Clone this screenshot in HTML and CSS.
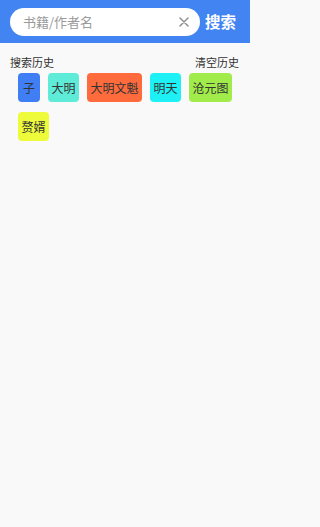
FILE: index.html
```html
<!DOCTYPE html>
<html lang="zh">
<head>
<meta charset="utf-8">
<meta name="viewport" content="width=250">
<link rel="stylesheet" href="styles.css">
</head>
<body>
<div class="page">
  <div class="header">
    <div class="search-box">
      <span class="placeholder">书籍/作者名</span>
      <svg class="clear" width="10" height="10" viewBox="0 0 10 10"><path d="M1 1L9 9M9 1L1 9" stroke="#8a8a8a" stroke-width="1.4" fill="none" stroke-linecap="round"/></svg>
    </div>
    <span class="search-btn">搜索</span>
  </div>
  <div class="history-head">
    <span>搜索历史</span>
    <span>清空历史</span>
  </div>
  <div class="tags">
    <span class="tag single c-blue">子</span>
    <span class="tag c-teal">大明</span>
    <span class="tag c-orange">大明文魁</span>
    <span class="tag c-cyan">明天</span>
    <span class="tag c-green">沧元图</span>
    <span class="tag c-yellow">赘婿</span>
  </div>
</div>
</body>
</html>
```
FILE: styles.css
```css
html, body {
  margin: 0;
  padding: 0;
  height: 100%;
  background: #f9f9f9;
  font-family: "Noto Sans CJK SC", "Noto Sans", sans-serif;
  color: #333;
}
.page {
  width: 250px;
  min-height: 100%;
}
.header {
  height: 43px;
  background: #4285f2;
  display: flex;
  align-items: center;
  padding: 0 0 0 10px;
}
.search-box {
  width: 190px;
  height: 28px;
  border-radius: 14px;
  background: #fff;
  display: flex;
  align-items: center;
  justify-content: space-between;
  padding: 0 11px 0 13px;
  box-sizing: border-box;
}
.placeholder {
  font-size: 13px;
  color: #9a9a9a;
  line-height: 1;
}
.clear {
  display: block;
}
.search-btn {
  margin-left: 5px;
  font-size: 15.5px;
  font-weight: bold;
  color: #fff;
  line-height: 1;
}
.history-head {
  display: flex;
  justify-content: space-between;
  padding: 0 11px 0 10px;
  margin-top: 12px;
  font-size: 11px;
  line-height: 14px;
  color: #333;
}
.tags {
  display: flex;
  flex-wrap: wrap;
  gap: 10px 8px;
  padding: 4px 8px 0 18px;
}
.tag {
  height: 29px;
  line-height: 29px;
  padding: 0 3.5px;
  font-size: 12px;
  border-radius: 4px;
  color: #333;
  text-align: center;
  box-sizing: border-box;
}
.tag.single { min-width: 22px; }
.c-blue { background: #3f7ef4; }
.c-teal { background: #5eecd9; }
.c-orange { background: #ff6b3d; }
.c-cyan { background: #1ef1f5; }
.c-green { background: #a1ec4b; }
.c-yellow { background: #edfb3b; }
```
